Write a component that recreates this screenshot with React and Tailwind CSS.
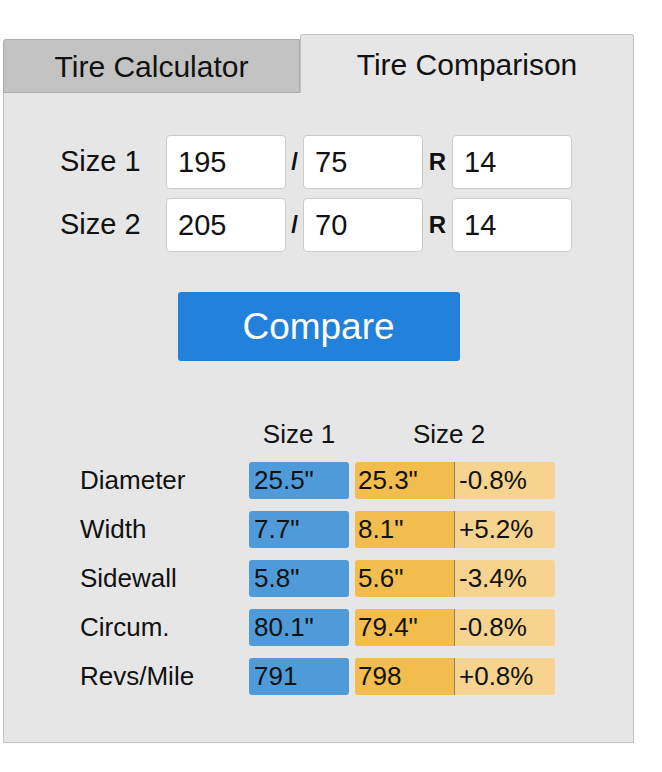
export default function App() {
    const rows = [
        { label: "Diameter", a: '25.5"', b: '25.3"', d: "-0.8%" },
        { label: "Width", a: '7.7"', b: '8.1"', d: "+5.2%" },
        { label: "Sidewall", a: '5.8"', b: '5.6"', d: "-3.4%" },
        { label: "Circum.", a: '80.1"', b: '79.4"', d: "-0.8%" },
        { label: "Revs/Mile", a: "791", b: "798", d: "+0.8%" },
    ];

    const sizes = [
        { label: "Size 1", w: "195", r: "75", d: "14" },
        { label: "Size 2", w: "205", r: "70", d: "14" },
    ];

    const inputCls =
        "w-[120px] h-[54px] bg-white border border-[#cbcbcb] rounded-[4px] pl-[11px] text-[29px] text-[#111] outline-none";

    return (
        <div className="min-h-screen bg-white pt-[34px] pl-[3px] text-[#111] font-['Liberation_Sans',Arial,sans-serif]">
            <div className="w-[631px]">
                <div className="flex items-end">
                    <div className="w-[297px] h-[54px] bg-[#c3c3c3] border border-[#acacac] rounded-tl-[3px] flex items-center justify-center text-[30px]">
                        Tire Calculator
                    </div>
                    <div className="flex-1 h-[59px] bg-[#e6e6e6] border border-b-0 border-[#c2c2c2] rounded-t-[3px] flex items-center justify-center text-[30px]">
                        Tire Comparison
                    </div>
                </div>
                <div className="h-[650px] bg-[#e6e6e6] border border-t-0 border-[#c2c2c2] pt-[42px]">
                    <div className="pl-[56px] flex flex-col gap-[9px]">
                        {sizes.map((s) => (
                            <div key={s.label} className="flex items-center">
                                <div className="w-[106px] text-[29px]">{s.label}</div>
                                <input className={inputCls} defaultValue={s.w} />
                                <div className="w-[17px] text-center text-[24px] font-bold">/</div>
                                <input className={inputCls} defaultValue={s.r} />
                                <div className="w-[29px] text-center text-[24px] font-bold">R</div>
                                <input className={inputCls} defaultValue={s.d} />
                            </div>
                        ))}
                    </div>

                    <button className="block mx-auto mt-[40px] w-[282px] h-[69px] bg-[#2281db] rounded-[3px] text-white text-[37px]">
                        Compare
                    </button>

                    <div className="ml-[76px] mt-[58px]">
                        <div className="flex h-[30px] items-center text-[26px]">
                            <div className="w-[169px]"></div>
                            <div className="w-[100px] text-center">Size 1</div>
                            <div className="pl-[64px]">Size 2</div>
                        </div>
                        <div className="mt-[13px] flex flex-col gap-[12px]">
                            {rows.map((r) => (
                                <div key={r.label} className="flex h-[37px] items-center text-[26px]">
                                    <div className="w-[169px]">{r.label}</div>
                                    <div className="w-[100px] h-full bg-[#4f9bda] rounded-[3px] pl-[5px] flex items-center">
                                        {r.a}
                                    </div>
                                    <div className="ml-[6px] flex h-full rounded-[3px] overflow-hidden">
                                        <div className="w-[100px] bg-[#f3bd4e] pl-[3px] flex items-center border-r border-[#8f8266]">
                                            {r.b}
                                        </div>
                                        <div className="w-[100px] bg-[#f6d38f] pl-[4px] flex items-center">{r.d}</div>
                                    </div>
                                </div>
                            ))}
                        </div>
                    </div>
                </div>
            </div>
        </div>
    );
}
